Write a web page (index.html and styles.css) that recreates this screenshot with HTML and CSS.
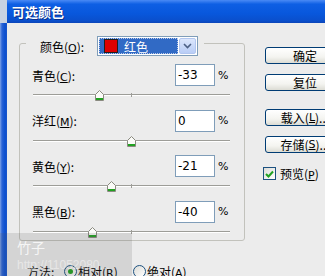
FILE: index.html
```html
<!DOCTYPE html>
<html>
<head>
<meta charset="utf-8">
<link rel="stylesheet" href="styles.css">
</head>
<body>
<div class="screen">
  <div class="titlebar"><span class="title">可选颜色</span></div>
  <div class="body">
    <div class="frame-left"></div>
    <div class="client">
      <div class="top">
        <div class="group">
          <div class="legend">
            <span class="legend-label">颜色(<u>O</u>):</span>
            <div class="select">
              <div class="select-value">
                <span class="swatch"></span>
                <span class="select-text">红色</span>
              </div>
              <div class="select-arrow">
                <svg width="9" height="6" viewBox="0 0 9 6"><path d="M1 1 L4.5 4.5 L8 1" fill="none" stroke="#4d6185" stroke-width="1.6"/></svg>
              </div>
            </div>
          </div>
          <div class="rows">
            <div class="row">
              <div class="row-head">
                <span class="lbl">青色(<u>C</u>):</span>
                <span class="num">-33</span>
                <span class="pct">%</span>
              </div>
              <div class="slider">
                <div class="track"></div>
                <div class="tick"></div>
                <svg class="thumb" style="left:62px" width="9" height="11" viewBox="0 0 9 11"><path d="M0.5 4.5 L4.5 0.5 L8.5 4.5 V10.5 H0.5 Z" fill="#fbfbf8" stroke="#8a8a80"/><rect x="1" y="8" width="7" height="2" fill="#21a121"/></svg>
              </div>
            </div>
            <div class="row">
              <div class="row-head">
                <span class="lbl">洋红(<u>M</u>):</span>
                <span class="num">0</span>
                <span class="pct">%</span>
              </div>
              <div class="slider">
                <div class="track"></div>
                <div class="tick"></div>
                <svg class="thumb" style="left:94px" width="9" height="11" viewBox="0 0 9 11"><path d="M0.5 4.5 L4.5 0.5 L8.5 4.5 V10.5 H0.5 Z" fill="#fbfbf8" stroke="#8a8a80"/><rect x="1" y="8" width="7" height="2" fill="#21a121"/></svg>
              </div>
            </div>
            <div class="row">
              <div class="row-head">
                <span class="lbl">黄色(<u>Y</u>):</span>
                <span class="num">-21</span>
                <span class="pct">%</span>
              </div>
              <div class="slider">
                <div class="track"></div>
                <div class="tick"></div>
                <svg class="thumb" style="left:74px" width="9" height="11" viewBox="0 0 9 11"><path d="M0.5 4.5 L4.5 0.5 L8.5 4.5 V10.5 H0.5 Z" fill="#fbfbf8" stroke="#8a8a80"/><rect x="1" y="8" width="7" height="2" fill="#21a121"/></svg>
              </div>
            </div>
            <div class="row">
              <div class="row-head">
                <span class="lbl">黑色(<u>B</u>):</span>
                <span class="num">-40</span>
                <span class="pct">%</span>
              </div>
              <div class="slider">
                <div class="track"></div>
                <div class="tick"></div>
                <svg class="thumb" style="left:55px" width="9" height="11" viewBox="0 0 9 11"><path d="M0.5 4.5 L4.5 0.5 L8.5 4.5 V10.5 H0.5 Z" fill="#fbfbf8" stroke="#8a8a80"/><rect x="1" y="8" width="7" height="2" fill="#21a121"/></svg>
              </div>
            </div>
          </div>
        </div>
        <div class="side">
          <div class="btn">确定</div>
          <div class="btn">复位</div>
          <div class="btn btn-gap">载入(<u>L</u>)...</div>
          <div class="btn">存储(<u>S</u>)...</div>
          <div class="check-row">
            <span class="checkbox">
              <svg width="9" height="8" viewBox="0 0 9 8"><path d="M1 4 L3.5 6.5 L8 1.5" fill="none" stroke="#21a121" stroke-width="2"/></svg>
            </span>
            <span class="check-label">预览(<u>P</u>)</span>
          </div>
        </div>
      </div>
      <div class="method">
        <span class="method-label">方法:</span>
        <span class="radio radio-on"><span class="dot"></span></span>
        <span class="radio-label">相对(<u>R</u>)</span>
        <span class="radio"></span>
        <span class="radio-label">绝对(<u>A</u>)</span>
      </div>
    </div>
  </div>
  <div class="watermark">
    <div class="wm-name">竹子</div>
    <div class="wm-url">http://11052080...</div>
  </div>
</div>
</body>
</html>
```
FILE: styles.css
```css
* { box-sizing: border-box; }
html, body { margin: 0; padding: 0; }
body {
  width: 325px;
  height: 276px;
  overflow: hidden;
  background: #c8d2e2;
  font-family: "Liberation Sans", "Noto Sans CJK SC", sans-serif;
  font-size: 12px;
  color: #000;
}
u { text-decoration: underline; }
.screen {
  position: relative;
  width: 325px;
  height: 276px;
  display: flex;
  flex-direction: column;
}
.titlebar {
  height: 23px;
  margin-left: 7px;
  background: linear-gradient(#4a8af5 0%, #0e5fe4 18%, #0857dc 60%, #0a4fcc 90%, #0c45b8 100%);
  display: flex;
  align-items: center;
  padding-left: 5px;
  flex: none;
}
.title {
  color: #fff;
  font-family: "Noto Sans CJK SC", sans-serif;
  font-weight: bold;
  font-size: 13px;
  text-shadow: 1px 1px 0 #0a2f8a;
}
.body {
  flex: 1;
  display: flex;
  min-height: 0;
}
.frame-left {
  width: 7px;
  flex: none;
  background: linear-gradient(90deg, #7da2e8 0px, #2a64d6 2px, #0b4fd0 5px, #1a55c8 7px);
}
.client {
  flex: 1;
  min-width: 0;
  background: #ececec;
  display: flex;
  flex-direction: column;
}
.top {
  display: flex;
  align-items: flex-start;
}
.group {
  margin-left: 12px;
  margin-top: 20px;
  width: 226px;
  border: 1px solid #c2c2bc;
  border-radius: 3px;
  padding: 0 13px 0 12px;
  flex: none;
}
.legend {
  display: flex;
  align-items: center;
  width: fit-content;
  margin-top: -8px;
  margin-left: -6px;
  padding: 0 6px 0 14px;
  background: #ececec;
  height: 20px;
}
.legend-label {
  font-family: "Noto Sans CJK SC", sans-serif;
  width: 57px;
  white-space: nowrap;
}
.legend-label u, .lbl u, .btn u, .check-label u, .radio-label u {
  font-family: "DejaVu Sans", sans-serif;
  font-size: 11px;
}
.select {
  width: 101px;
  height: 20px;
  border: 1px solid #7f9db9;
  background: #fff;
  display: flex;
  padding: 1px;
}
.select-value {
  width: 79px;
  background: #316ac5;
  outline: 1px dotted #b8c8e8;
  outline-offset: -1px;
  display: flex;
  align-items: center;
  padding-left: 5px;
}
.swatch {
  width: 14px;
  height: 14px;
  background: #dd0000;
  border: 1px solid #202020;
  flex: none;
}
.select-text {
  color: #fff;
  margin-left: 6px;
  font-family: "Noto Sans CJK SC", sans-serif;
}
.select-arrow {
  margin-left: 1px;
  width: 17px;
  background: linear-gradient(#dbe6fc, #b9cdf6);
  border: 1px solid #b2c6ef;
  border-radius: 2px;
  display: flex;
  align-items: center;
  justify-content: center;
}
.rows {
  margin-top: 8px;
  display: flex;
  flex-direction: column;
}
.row {
  display: flex;
  flex-direction: column;
}
.row + .row { margin-top: 6.5px; }
.row-head {
  height: 22px;
  display: flex;
  align-items: center;
}
.lbl {
  flex: 1;
  font-family: "Noto Sans CJK SC", sans-serif;
  white-space: nowrap;
}
.num {
  width: 40px;
  height: 22px;
  border: 1px solid #7f9db9;
  background: #fff;
  padding-left: 2px;
  line-height: 20px;
  font-family: "DejaVu Sans", sans-serif;
  font-size: 12px;
}
.pct {
  width: 13px;
  margin-left: 3px;
  font-family: "DejaVu Sans", sans-serif;
  font-size: 11px;
}
.slider {
  position: relative;
  height: 17px;
  margin-left: 1px;
  width: 197px;
}
.track {
  position: absolute;
  left: 0;
  right: 0;
  top: 8px;
  height: 2px;
  border-top: 1px solid #9d9d98;
  border-bottom: 1px solid #ffffff;
}
.tick {
  position: absolute;
  left: 98px;
  top: 7px;
  width: 1px;
  height: 4px;
  background: #9d9d98;
}
.thumb {
  position: absolute;
  top: 4px;
}
.side {
  margin-left: 20px;
  padding-top: 24px;
  display: flex;
  flex-direction: column;
  flex: none;
}
.btn {
  width: 80px;
  height: 17px;
  border: 1px solid #003c74;
  border-radius: 3px;
  background: linear-gradient(#ffffff, #f4f4f0 60%, #dcdcd4);
  display: flex;
  align-items: center;
  justify-content: center;
  font-family: "Noto Sans CJK SC", sans-serif;
  font-size: 12px;
  white-space: nowrap;
  padding-left: 0;
}
.btn + .btn { margin-top: 10px; }
.btn.btn-gap { margin-top: 18px; }
.check-row {
  margin-top: 12px;
  display: flex;
  align-items: center;
  margin-left: -2px;
}
.checkbox {
  width: 13px;
  height: 13px;
  border: 1px solid #1c5180;
  background: linear-gradient(135deg, #dcdcd7, #ffffff);
  display: flex;
  align-items: center;
  justify-content: center;
}
.check-label {
  margin-left: 4px;
  font-family: "Noto Sans CJK SC", sans-serif;
  white-space: nowrap;
}
.method {
  margin-top: 22px;
  padding-left: 20px;
  display: flex;
  align-items: center;
  height: 18px;
}
.method-label {
  font-family: "Noto Sans CJK SC", sans-serif;
  width: 37px;
  white-space: nowrap;
}
.radio {
  width: 13px;
  height: 13px;
  border-radius: 50%;
  border: 1px solid #1c5180;
  background: linear-gradient(135deg, #dcdcd7, #ffffff);
  display: flex;
  align-items: center;
  justify-content: center;
  flex: none;
}
.dot {
  width: 5px;
  height: 5px;
  border-radius: 50%;
  background: #21a121;
}
.radio-label {
  margin-left: 1px;
  width: 55px;
  font-family: "Noto Sans CJK SC", sans-serif;
  white-space: nowrap;
}
.watermark {
  position: absolute;
  left: 0;
  top: 233px;
  width: 132px;
  height: 43px;
  background: rgba(90, 90, 90, 0.16);
  padding: 6px 0 0 17px;
  color: rgba(255, 255, 255, 0.8);
  pointer-events: none;
}
.wm-name {
  font-family: "Noto Sans CJK SC", sans-serif;
  font-size: 14px;
  line-height: 16px;
}
.wm-url {
  margin-top: 3px;
  font-size: 12px;
  color: rgba(255, 255, 255, 0.45);
}
```
